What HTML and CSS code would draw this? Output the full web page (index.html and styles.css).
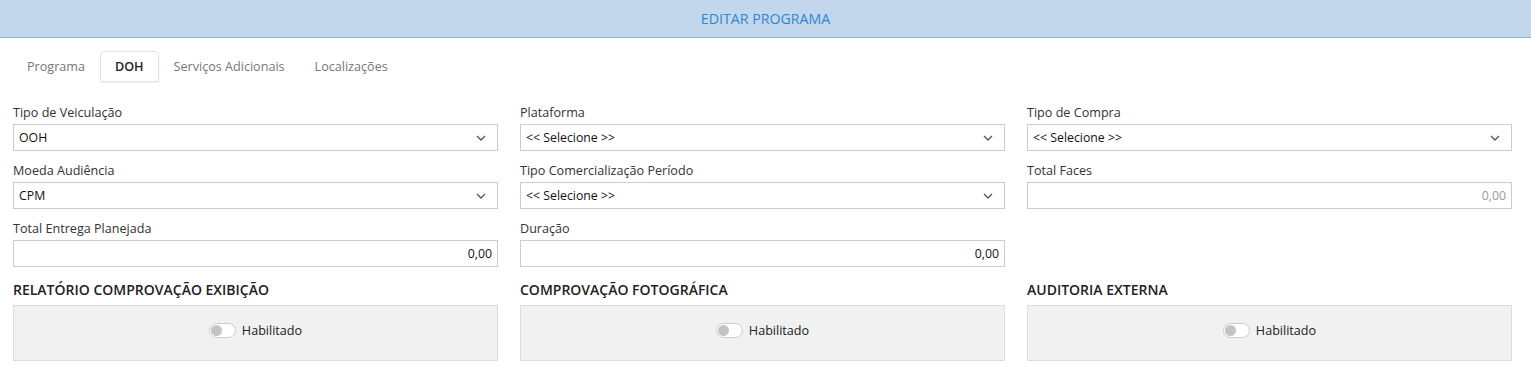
FILE: index.html
```html
<!DOCTYPE html>
<html lang="pt-BR">
  <head>
    <meta charset="UTF-8" />
    <meta name="viewport" content="width=device-width, initial-scale=1.0" />
    <title>Editar Programa</title>
    <link rel="stylesheet" href="styles.css">
  </head>
  <body>
    <div class="modal-header">EDITAR PROGRAMA</div>

    <ul class="tabs">
      <li class="tab">Programa</li>
      <li class="tab active">DOH</li>
      <li class="tab">Serviços Adicionais</li>
      <li class="tab">Localizações</li>
    </ul>

    <div class="form-grid">
      <div class="field">
        <label>Tipo de Veiculação</label>
        <div class="select"><span>OOH</span><svg class="chevron" viewBox="0 0 10 6"><path d="M1 1l4 4 4-4" /></svg></div>
      </div>
      <div class="field">
        <label>Plataforma</label>
        <div class="select"><span>&lt;&lt; Selecione &gt;&gt;</span><svg class="chevron" viewBox="0 0 10 6"><path d="M1 1l4 4 4-4" /></svg></div>
      </div>
      <div class="field">
        <label>Tipo de Compra</label>
        <div class="select"><span>&lt;&lt; Selecione &gt;&gt;</span><svg class="chevron" viewBox="0 0 10 6"><path d="M1 1l4 4 4-4" /></svg></div>
      </div>

      <div class="field">
        <label>Moeda Audiência</label>
        <div class="select"><span>CPM</span><svg class="chevron" viewBox="0 0 10 6"><path d="M1 1l4 4 4-4" /></svg></div>
      </div>
      <div class="field">
        <label>Tipo Comercialização Período</label>
        <div class="select"><span>&lt;&lt; Selecione &gt;&gt;</span><svg class="chevron" viewBox="0 0 10 6"><path d="M1 1l4 4 4-4" /></svg></div>
      </div>
      <div class="field">
        <label>Total Faces</label>
        <div class="input muted">0,00</div>
      </div>

      <div class="field">
        <label>Total Entrega Planejada</label>
        <div class="input">0,00</div>
      </div>
      <div class="field">
        <label>Duração</label>
        <div class="input">0,00</div>
      </div>
      <div class="field"></div>

      <div class="section">
        <h3>RELATÓRIO COMPROVAÇÃO EXIBIÇÃO</h3>
        <div class="panel"><span class="switch"></span>Habilitado</div>
      </div>
      <div class="section">
        <h3>COMPROVAÇÃO FOTOGRÁFICA</h3>
        <div class="panel"><span class="switch"></span>Habilitado</div>
      </div>
      <div class="section">
        <h3>AUDITORIA EXTERNA</h3>
        <div class="panel"><span class="switch"></span>Habilitado</div>
      </div>
    </div>
  </body>
</html>
```

FILE: styles.css
```css
body {
  margin: 0;
  font-family: "Open Sans", Arial, sans-serif;
  font-size: 12.6px;
  color: #333;
  background: #fff;
}

.modal-header {
  height: 37px;
  line-height: 37px;
  background: #c2d7ec;
  border-bottom: 1px solid #7db9ef;
  text-align: center;
  color: #2f86d0;
  font-size: 14.2px;
}

.tabs {
  list-style: none;
  margin: 13px 0 0;
  padding: 0 0 0 12px;
  display: flex;
  height: 31px;
}

.tab {
  padding: 0 14px;
  line-height: 29px;
  color: #777;
  border: 1px solid transparent;
  border-radius: 4px 4px 0 0;
}

.tab.active {
  color: #222;
  font-weight: 600;
  border-color: #e2e2e2;
  box-shadow: 0 1px 2px rgba(0, 0, 0, 0.06);
}

.form-grid {
  display: grid;
  grid-template-columns: repeat(3, 1fr);
  column-gap: 22px;
  padding: 22px 19px 0 13px;
}

.field {
  display: flex;
  flex-direction: column;
  height: 58px;
}

.field label {
  line-height: 18px;
  margin-bottom: 2px;
}

.select,
.input {
  height: 25px;
  border: 1px solid #ccc;
  display: flex;
  align-items: center;
  padding: 0 11px 0 5px;
  color: #111;
  font-size: 12.3px;
}

.select {
  justify-content: space-between;
}

.input {
  justify-content: flex-end;
  padding-right: 5px;
}

.input.muted {
  color: #999;
}

.chevron {
  width: 10px;
  height: 6px;
  fill: none;
  stroke: #555;
  stroke-width: 1.3;
}

.section h3 {
  margin: 3px 0 6px;
  font-size: 14px;
  font-weight: 600;
  color: #222;
  line-height: 18px;
}

.panel {
  box-sizing: border-box;
  height: 56px;
  padding-bottom: 5px;
  background: #f1f1f1;
  border: 1px solid #ddd;
  display: flex;
  justify-content: center;
  align-items: center;
  gap: 6px;
  color: #222;
}

.switch {
  position: relative;
  width: 25px;
  height: 13px;
  border: 1px solid #ccc;
  border-radius: 8px;
  background: #fff;
}

.switch::after {
  content: "";
  position: absolute;
  left: 1px;
  top: 1px;
  width: 11px;
  height: 11px;
  border-radius: 50%;
  background: #c3c3c3;
}
```
